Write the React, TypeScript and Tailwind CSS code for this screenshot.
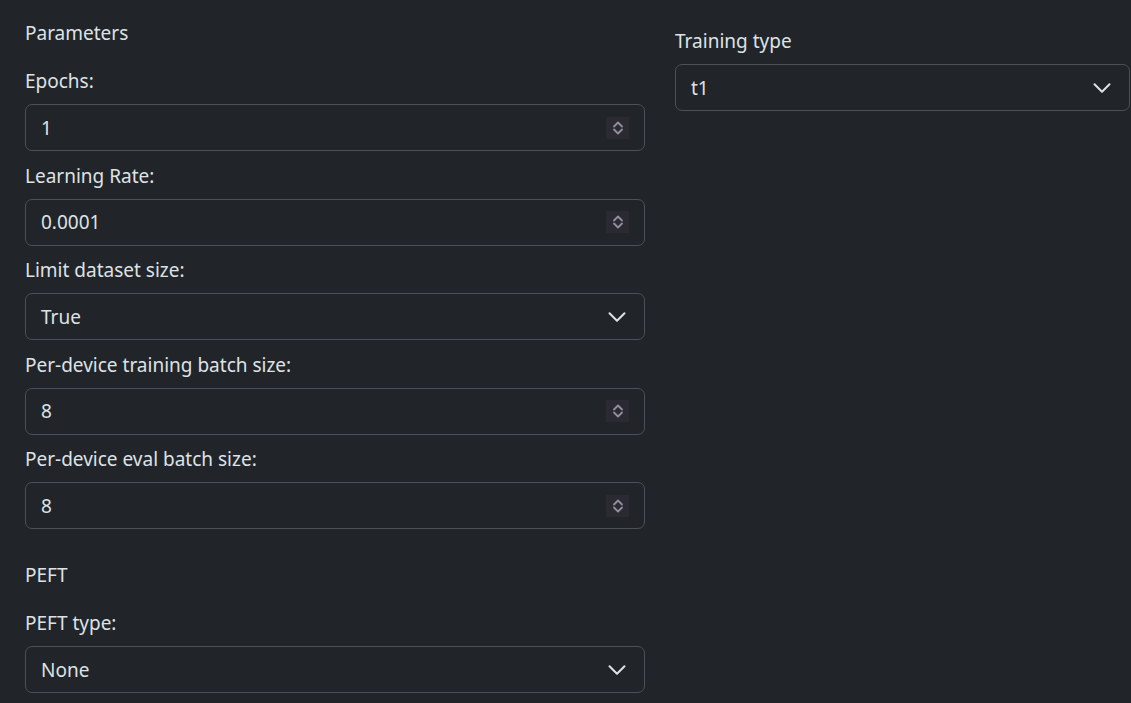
import React from "react";

const Chevron = () => (
  <svg width="20" height="20" viewBox="0 0 16 16" fill="none" className="shrink-0">
    <path d="m2 5 6 6 6-6" stroke="#dee2e6" strokeWidth="1.6" strokeLinecap="round" strokeLinejoin="round" />
  </svg>
);

const Spinner = () => (
  <div className="w-[23px] h-[22px] bg-[#2b2a33] flex items-center justify-center shrink-0">
    <svg width="12" height="18" viewBox="0 0 12 18" fill="none">
      <path d="M2 7.5 6 3.5 10 7.5" stroke="#8f8f9d" strokeWidth="1.8" strokeLinecap="round" strokeLinejoin="round" />
      <path d="M2 10.5 6 14.5 10 10.5" stroke="#8f8f9d" strokeWidth="1.8" strokeLinecap="round" strokeLinejoin="round" />
    </svg>
  </div>
);

const Label = ({ children }: { children: React.ReactNode }) => (
  <div className="h-[30px] leading-[30px] text-[#dee2e6] text-[19px]">{children}</div>
);

const NumberInput = ({ value }: { value: string }) => (
  <div className="mt-[8px] h-[47px] border border-[#495057] rounded-[7px] flex items-center pl-[15px] pr-[15px] text-[19px] text-[#dee2e6]">
    <span className="flex-1 pt-[1px]">{value}</span>
    <Spinner />
  </div>
);

const Select = ({ value }: { value: string }) => (
  <div className="mt-[8px] h-[47px] border border-[#495057] rounded-[7px] flex items-center pl-[15px] pr-[17px] text-[19px] text-[#dee2e6]">
    <span className="flex-1 pt-[1px]">{value}</span>
    <Chevron />
  </div>
);

export default function App() {
  return (
    <div
      className="w-[1131px] h-[703px] overflow-hidden bg-[#212529] text-[#dee2e6] flex"
      style={{ fontFamily: '"Noto Sans", "Open Sans", sans-serif' }}
    >
      <div className="w-[620px] ml-[25px] shrink-0 flex flex-col pt-[18px]">
        <Label>Parameters</Label>
        <div className="mt-[18px]">
          <Label>Epochs:</Label>
          <NumberInput value="1" />
        </div>
        <div className="mt-[9.5px]">
          <Label>Learning Rate:</Label>
          <NumberInput value="0.0001" />
        </div>
        <div className="mt-[9.5px]">
          <Label>Limit dataset size:</Label>
          <Select value="True" />
        </div>
        <div className="mt-[9.5px]">
          <Label>Per-device training batch size:</Label>
          <NumberInput value="8" />
        </div>
        <div className="mt-[9.5px]">
          <Label>Per-device eval batch size:</Label>
          <NumberInput value="8" />
        </div>
        <div className="mt-[31px]">
          <Label>PEFT</Label>
        </div>
        <div className="mt-[18px]">
          <Label>PEFT type:</Label>
          <Select value="None" />
        </div>
      </div>
      <div className="w-[455px] ml-[30px] shrink-0 pt-[26px]">
        <Label>Training type</Label>
        <Select value="t1" />
      </div>
    </div>
  );
}
